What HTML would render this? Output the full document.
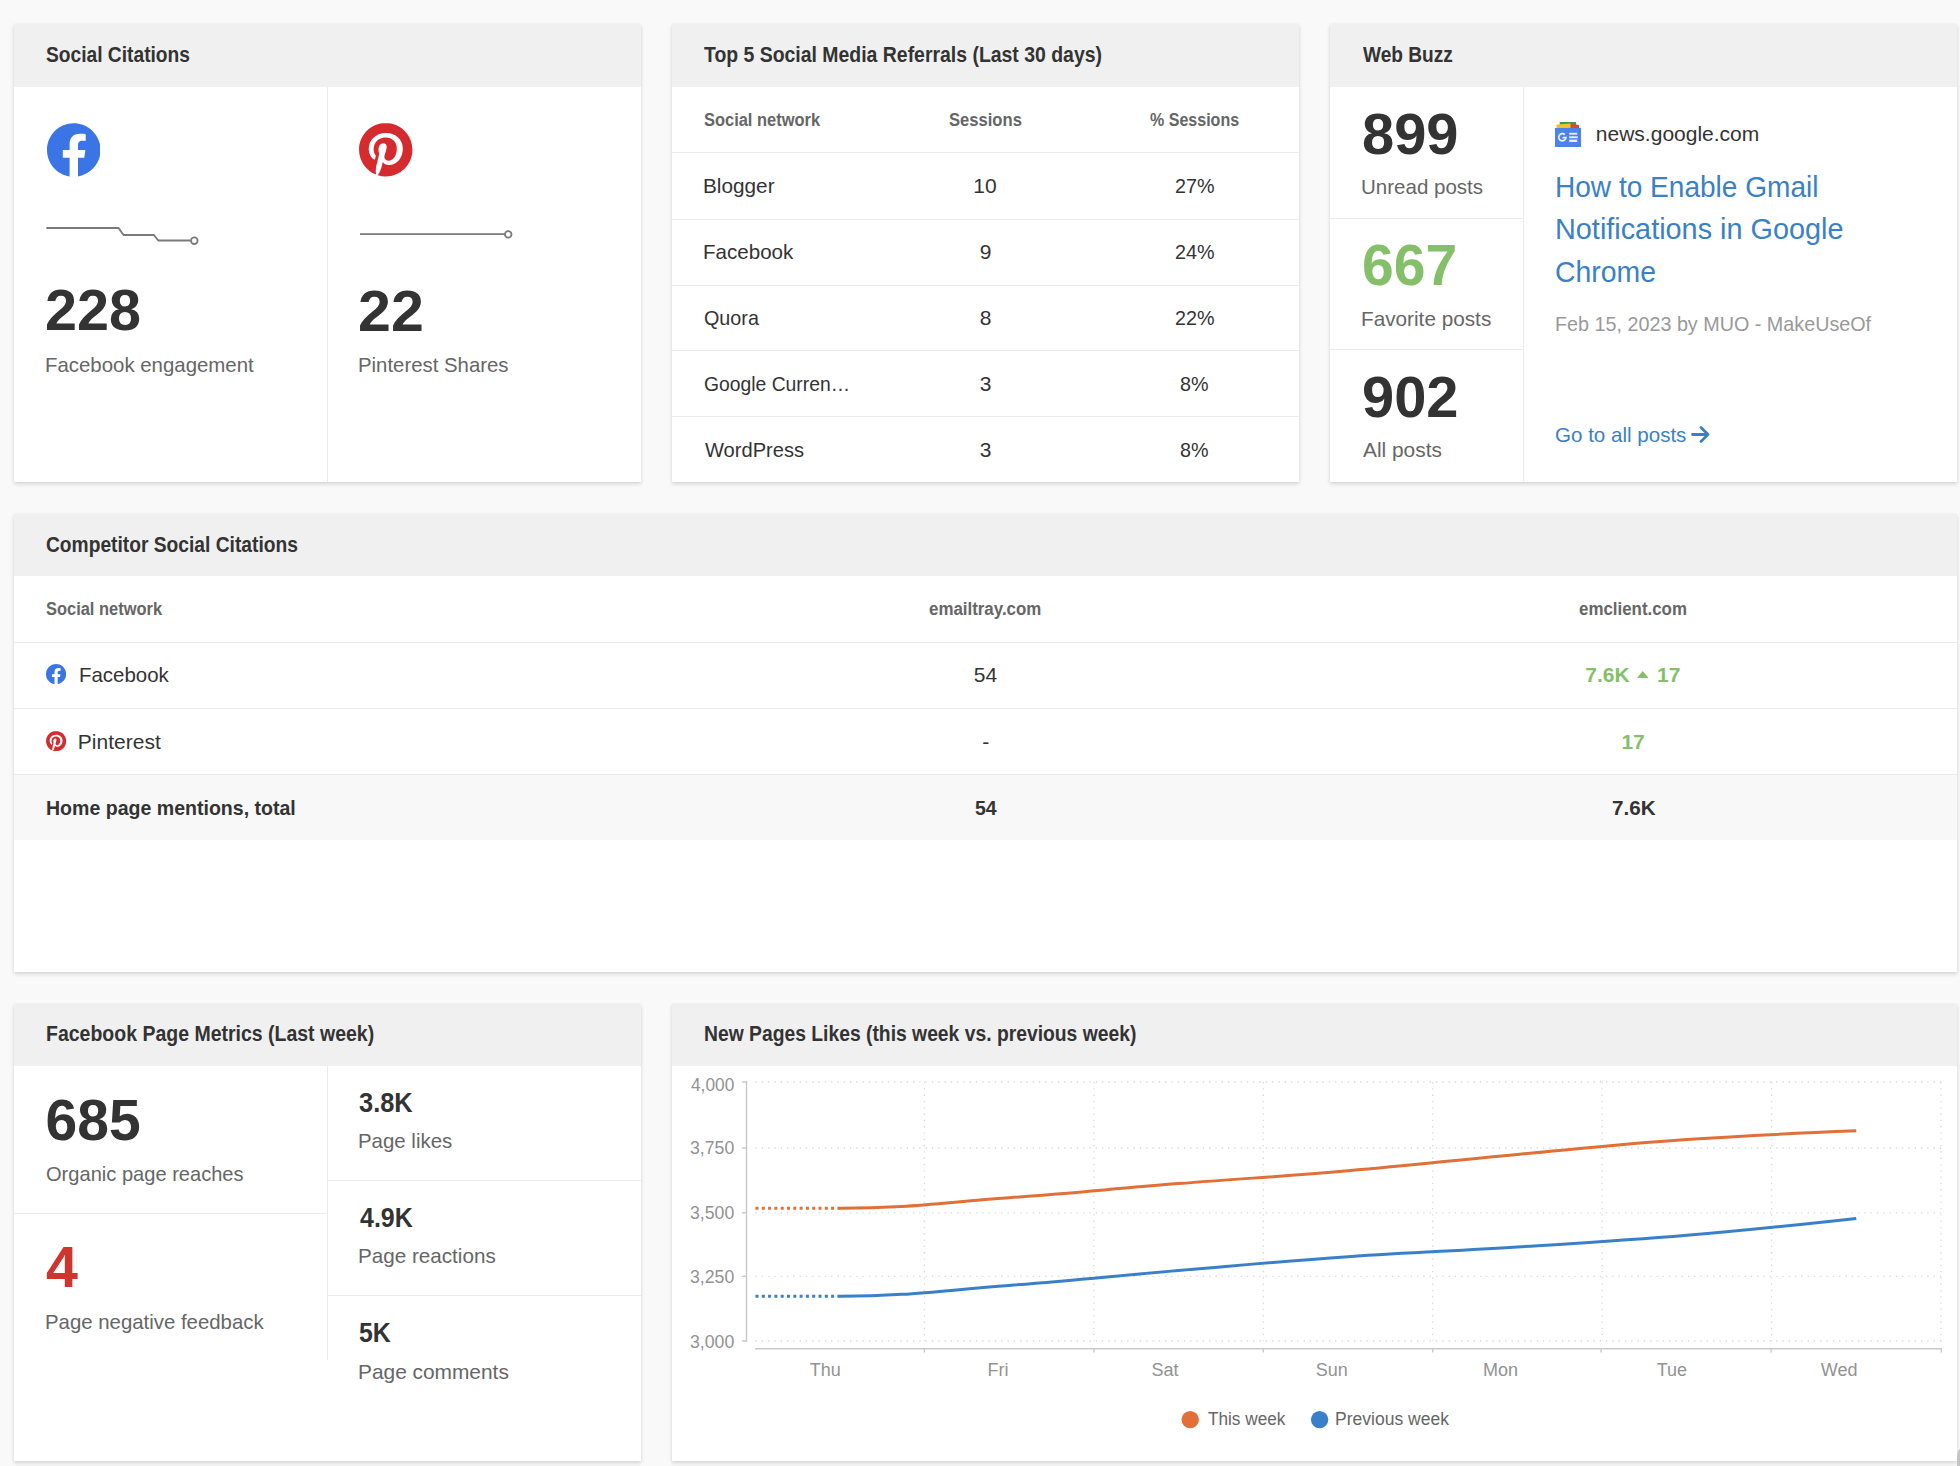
<!DOCTYPE html>
<html><head><meta charset="utf-8"><style>
html,body{margin:0;padding:0;}
body{width:1960px;height:1466px;background:#f9f9f9;position:relative;overflow:hidden;font-family:"Liberation Sans",sans-serif;}
.abs{position:absolute;}
.card{position:absolute;background:#fff;box-shadow:0 1.5px 4px rgba(0,0,0,0.15), 0 0 1px rgba(0,0,0,0.06);}
.hd{background:#f0f0f0;}
.t{position:absolute;white-space:nowrap;transform-origin:0 0;}
</style></head><body>
<div class="card" style="left:14px;top:24px;width:627px;height:458px"><div class="hd" style="height:63px"></div></div><div class="card" style="left:672px;top:24px;width:627px;height:458px"><div class="hd" style="height:63px"></div></div><div class="card" style="left:1330px;top:24px;width:627px;height:458px"><div class="hd" style="height:63px"></div></div><div class="card" style="left:14px;top:514px;width:1943px;height:458px"><div class="hd" style="height:62px"></div></div><div class="card" style="left:14px;top:1004px;width:627px;height:457px"><div class="hd" style="height:62px"></div></div><div class="card" style="left:672px;top:1004px;width:1285px;height:457px"><div class="hd" style="height:62px"></div></div><div class="abs" style="left:327px;top:87px;width:1px;height:395px;background:#ebebeb"></div><div class="abs" style="left:672px;top:152px;width:627px;height:1px;background:#ebebeb"></div><div class="abs" style="left:672px;top:219px;width:627px;height:1px;background:#ebebeb"></div><div class="abs" style="left:672px;top:285px;width:627px;height:1px;background:#ebebeb"></div><div class="abs" style="left:672px;top:350px;width:627px;height:1px;background:#ebebeb"></div><div class="abs" style="left:672px;top:416px;width:627px;height:1px;background:#ebebeb"></div><div class="abs" style="left:1523px;top:87px;width:1px;height:395px;background:#ebebeb"></div><div class="abs" style="left:1330px;top:218px;width:193px;height:1px;background:#ebebeb"></div><div class="abs" style="left:1330px;top:349px;width:193px;height:1px;background:#ebebeb"></div><div class="abs" style="left:14px;top:774px;width:1943px;height:66px;background:#f8f8f8"></div><div class="abs" style="left:14px;top:642px;width:1943px;height:1px;background:#ebebeb"></div><div class="abs" style="left:14px;top:708px;width:1943px;height:1px;background:#ebebeb"></div><div class="abs" style="left:14px;top:774px;width:1943px;height:1px;background:#ebebeb"></div><div class="abs" style="left:327px;top:1066px;width:1px;height:294px;background:#ebebeb"></div><div class="abs" style="left:14px;top:1213px;width:313px;height:1px;background:#ebebeb"></div><div class="abs" style="left:328px;top:1180px;width:313px;height:1px;background:#ebebeb"></div><div class="abs" style="left:328px;top:1295px;width:313px;height:1px;background:#ebebeb"></div>
<svg class="abs" style="left:46.9px;top:123.3px" width="53.6" height="53.6" viewBox="0 0 24 24"><path fill="#3b75e5" d="M24 12.073c0-6.627-5.373-12-12-12s-12 5.373-12 12c0 5.99 4.388 10.954 10.125 11.854v-8.385H7.078v-3.47h3.047V9.43c0-3.007 1.792-4.669 4.533-4.669 1.312 0 2.686.235 2.686.235v2.953H15.83c-1.491 0-1.956.925-1.956 1.874v2.25h3.328l-.532 3.47h-2.796v8.385C19.612 23.027 24 18.062 24 12.073z"/></svg><svg class="abs" style="left:359.2px;top:123.4px" width="53.5" height="53.5" viewBox="0 0 24 24"><path fill="#d52b2f" d="M12.017 0C5.396 0 .029 5.367.029 11.987c0 5.079 3.158 9.417 7.618 11.162-.105-.949-.199-2.403.041-3.439.219-.937 1.406-5.957 1.406-5.957s-.359-.72-.359-1.781c0-1.663.967-2.911 2.168-2.911 1.024 0 1.518.769 1.518 1.688 0 1.029-.653 2.567-.992 3.992-.285 1.193.6 2.165 1.775 2.165 2.128 0 3.768-2.245 3.768-5.487 0-2.861-2.063-4.869-5.008-4.869-3.41 0-5.409 2.562-5.409 5.199 0 1.033.394 2.143.889 2.741.099.12.112.225.085.345-.09.375-.293 1.199-.334 1.363-.053.225-.172.271-.401.165-1.495-.69-2.433-2.878-2.433-4.646 0-3.776 2.748-7.252 7.92-7.252 4.158 0 7.392 2.967 7.392 6.923 0 4.135-2.607 7.462-6.233 7.462-1.214 0-2.354-.629-2.758-1.379l-.749 2.848c-.269 1.045-1.004 2.352-1.498 3.146 1.123.345 2.306.535 3.55.535 6.607 0 11.985-5.365 11.985-11.987C23.97 5.39 18.592.026 11.985.026L12.017 0z"/></svg><svg class="abs" style="left:46px;top:664.2px" width="20.2" height="20.2" viewBox="0 0 24 24"><path fill="#3b75e5" d="M24 12.073c0-6.627-5.373-12-12-12s-12 5.373-12 12c0 5.99 4.388 10.954 10.125 11.854v-8.385H7.078v-3.47h3.047V9.43c0-3.007 1.792-4.669 4.533-4.669 1.312 0 2.686.235 2.686.235v2.953H15.83c-1.491 0-1.956.925-1.956 1.874v2.25h3.328l-.532 3.47h-2.796v8.385C19.612 23.027 24 18.062 24 12.073z"/></svg><svg class="abs" style="left:46px;top:731px" width="20.2" height="20.2" viewBox="0 0 24 24"><path fill="#d52b2f" d="M12.017 0C5.396 0 .029 5.367.029 11.987c0 5.079 3.158 9.417 7.618 11.162-.105-.949-.199-2.403.041-3.439.219-.937 1.406-5.957 1.406-5.957s-.359-.72-.359-1.781c0-1.663.967-2.911 2.168-2.911 1.024 0 1.518.769 1.518 1.688 0 1.029-.653 2.567-.992 3.992-.285 1.193.6 2.165 1.775 2.165 2.128 0 3.768-2.245 3.768-5.487 0-2.861-2.063-4.869-5.008-4.869-3.41 0-5.409 2.562-5.409 5.199 0 1.033.394 2.143.889 2.741.099.12.112.225.085.345-.09.375-.293 1.199-.334 1.363-.053.225-.172.271-.401.165-1.495-.69-2.433-2.878-2.433-4.646 0-3.776 2.748-7.252 7.92-7.252 4.158 0 7.392 2.967 7.392 6.923 0 4.135-2.607 7.462-6.233 7.462-1.214 0-2.354-.629-2.758-1.379l-.749 2.848c-.269 1.045-1.004 2.352-1.498 3.146 1.123.345 2.306.535 3.55.535 6.607 0 11.985-5.365 11.985-11.987C23.97 5.39 18.592.026 11.985.026L12.017 0z"/></svg>
<svg class="abs" style="left:1555px;top:121px" width="26" height="26" viewBox="0 0 26 26">
<rect x="4.7" y="1" width="16.3" height="7" fill="#3e9b4a"/>
<polygon points="1.5,3.5 15.7,2.5 15.7,8 1.5,8" fill="#f2be33"/>
<polygon points="15.7,2.5 24,4 24,8 15.7,8" fill="#d8473a"/>
<rect x="0" y="7" width="26" height="19" fill="#4c83ea"/>
<path d="M9.8,13.6 A3.6,3.6 0 1 0 10.9,16.6 L7.6,16.6" fill="none" stroke="#e8eefc" stroke-width="1.8"/>
<rect x="14.2" y="11.8" width="8" height="1.9" fill="#e8eefc"/>
<rect x="14.2" y="15.3" width="8.5" height="1.9" fill="#e8eefc"/>
<rect x="14.2" y="18.6" width="8" height="2.4" fill="#e8eefc"/>
</svg>
<svg class="abs" style="left:1691px;top:425px" width="20" height="19" viewBox="0 0 20 19"><path d="M1.5,9.5 H17 M10,2.5 L17,9.5 L10,16.5" fill="none" stroke="#3a80c6" stroke-width="2.8" stroke-linecap="round" stroke-linejoin="round"/></svg>
<svg class="abs" width="1960" height="1466" viewBox="0 0 1960 1466" style="left:0;top:0"><line x1="755.5" y1="1082" x2="1941" y2="1082" stroke="#d8d8d8" stroke-width="1.3" stroke-dasharray="1.3 5"/><line x1="755.5" y1="1148" x2="1941" y2="1148" stroke="#d8d8d8" stroke-width="1.3" stroke-dasharray="1.3 5"/><line x1="755.5" y1="1212.8" x2="1941" y2="1212.8" stroke="#d8d8d8" stroke-width="1.3" stroke-dasharray="1.3 5"/><line x1="755.5" y1="1276.3" x2="1941" y2="1276.3" stroke="#d8d8d8" stroke-width="1.3" stroke-dasharray="1.3 5"/><line x1="755.5" y1="1341" x2="1941" y2="1341" stroke="#d8d8d8" stroke-width="1.3" stroke-dasharray="1.3 5"/><line x1="924.4" y1="1082" x2="924.4" y2="1341" stroke="#d8d8d8" stroke-width="1.3" stroke-dasharray="1.3 5"/><line x1="1093.9" y1="1082" x2="1093.9" y2="1341" stroke="#d8d8d8" stroke-width="1.3" stroke-dasharray="1.3 5"/><line x1="1263.3" y1="1082" x2="1263.3" y2="1341" stroke="#d8d8d8" stroke-width="1.3" stroke-dasharray="1.3 5"/><line x1="1432.7" y1="1082" x2="1432.7" y2="1341" stroke="#d8d8d8" stroke-width="1.3" stroke-dasharray="1.3 5"/><line x1="1602.1" y1="1082" x2="1602.1" y2="1341" stroke="#d8d8d8" stroke-width="1.3" stroke-dasharray="1.3 5"/><line x1="1771.6" y1="1082" x2="1771.6" y2="1341" stroke="#d8d8d8" stroke-width="1.3" stroke-dasharray="1.3 5"/><line x1="1941" y1="1082" x2="1941" y2="1341" stroke="#d8d8d8" stroke-width="1.3" stroke-dasharray="1.3 5"/><line x1="746.5" y1="1081.3" x2="746.5" y2="1341.8" stroke="#c8c8c8" stroke-width="1.4"/><line x1="742" y1="1082" x2="747" y2="1082" stroke="#c8c8c8" stroke-width="1.4"/><line x1="742" y1="1148" x2="747" y2="1148" stroke="#c8c8c8" stroke-width="1.4"/><line x1="742" y1="1212.8" x2="747" y2="1212.8" stroke="#c8c8c8" stroke-width="1.4"/><line x1="742" y1="1276.3" x2="747" y2="1276.3" stroke="#c8c8c8" stroke-width="1.4"/><line x1="742" y1="1341" x2="747" y2="1341" stroke="#c8c8c8" stroke-width="1.4"/><line x1="755" y1="1348.8" x2="1942" y2="1348.8" stroke="#c8c8c8" stroke-width="1.5"/><line x1="924.4" y1="1348" x2="924.4" y2="1352.5" stroke="#c8c8c8" stroke-width="1.4"/><line x1="1093.9" y1="1348" x2="1093.9" y2="1352.5" stroke="#c8c8c8" stroke-width="1.4"/><line x1="1263.3" y1="1348" x2="1263.3" y2="1352.5" stroke="#c8c8c8" stroke-width="1.4"/><line x1="1432.7" y1="1348" x2="1432.7" y2="1352.5" stroke="#c8c8c8" stroke-width="1.4"/><line x1="1601.1" y1="1348" x2="1601.1" y2="1352.5" stroke="#c8c8c8" stroke-width="1.4"/><line x1="1771.1" y1="1348" x2="1771.1" y2="1352.5" stroke="#c8c8c8" stroke-width="1.4"/><line x1="1941.3" y1="1348" x2="1941.3" y2="1352.5" stroke="#c8c8c8" stroke-width="1.4"/><line x1="755.5" y1="1208.3" x2="840" y2="1208.3" stroke="#e07037" stroke-width="3" stroke-dasharray="3 3.3"/><path d="M839.70,1208.30 C907.46,1208.30 941.34,1202.64 1009.10,1197.70 C1076.90,1192.76 1110.80,1188.98 1178.60,1183.60 C1246.36,1178.22 1280.24,1176.64 1348.00,1170.80 C1415.76,1164.96 1449.64,1160.64 1517.40,1154.40 C1585.20,1148.16 1619.10,1144.32 1686.90,1139.60 C1754.66,1134.88 1856.30,1130.80 1856.30,1130.80" fill="none" stroke="#e07037" stroke-width="3" stroke-linecap="butt"/><line x1="755.5" y1="1296.2" x2="840" y2="1296.2" stroke="#3a80c8" stroke-width="3" stroke-dasharray="3 3.3"/><path d="M839.70,1296.20 C907.46,1296.20 941.34,1290.54 1009.10,1285.40 C1076.90,1280.26 1110.80,1276.24 1178.60,1270.50 C1246.36,1264.76 1280.24,1261.40 1348.00,1256.70 C1415.76,1252.00 1449.64,1251.28 1517.40,1247.00 C1585.20,1242.72 1619.10,1241.02 1686.90,1235.30 C1754.66,1229.58 1856.30,1218.40 1856.30,1218.40" fill="none" stroke="#3a80c8" stroke-width="3" stroke-linecap="butt"/><circle cx="1190.2" cy="1419.6" r="8.7" fill="#e07037"/><circle cx="1319.6" cy="1419.6" r="8.7" fill="#3a80c8"/><polyline points="46.4,228 118.5,228 123.6,235 153.8,235 158.4,240.5 190.5,240.5" fill="none" stroke="#7a7a7a" stroke-width="1.8"/><circle cx="194.3" cy="240.7" r="3.3" fill="#fff" stroke="#7a7a7a" stroke-width="1.8"/><polyline points="360,234.2 504.5,234.2" fill="none" stroke="#7a7a7a" stroke-width="1.8"/><circle cx="508.2" cy="234.4" r="3.3" fill="#fff" stroke="#7a7a7a" stroke-width="1.8"/><polygon points="1636.9,678 1648.6,678 1642.75,671" fill="#86bf6a"/></svg>
<div class="t" style="left:46.18px;top:44.20px;font-size:22px;line-height:22px;font-weight:700;color:#333;transform:scaleX(0.8724);">Social Citations</div><div class="t" style="left:704.45px;top:44.30px;font-size:22px;line-height:22px;font-weight:700;color:#333;transform:scaleX(0.8829);">Top 5 Social Media Referrals (Last 30 days)</div><div class="t" style="left:1362.65px;top:44.30px;font-size:22px;line-height:22px;font-weight:700;color:#333;transform:scaleX(0.8680);">Web Buzz</div><div class="t" style="left:46.38px;top:534.20px;font-size:22px;line-height:22px;font-weight:700;color:#333;transform:scaleX(0.8732);">Competitor Social Citations</div><div class="t" style="left:46.16px;top:1022.60px;font-size:22px;line-height:22px;font-weight:700;color:#333;transform:scaleX(0.8859);">Facebook Page Metrics (Last week)</div><div class="t" style="left:703.97px;top:1022.60px;font-size:22px;line-height:22px;font-weight:700;color:#333;transform:scaleX(0.8774);">New Pages Likes (this week vs. previous week)</div><div class="t" style="left:45.43px;top:282.00px;font-size:57px;line-height:57px;font-weight:700;color:#333;transform:scaleX(1.0088);">228</div><div class="t" style="left:45.31px;top:354.00px;font-size:21px;line-height:21px;color:#666;transform:scaleX(0.9714);">Facebook engagement</div><div class="t" style="left:358.18px;top:282.50px;font-size:57px;line-height:57px;font-weight:700;color:#333;transform:scaleX(1.0373);">22</div><div class="t" style="left:358.01px;top:353.60px;font-size:21px;line-height:21px;color:#666;transform:scaleX(0.9693);">Pinterest Shares</div><div class="t" style="left:703.74px;top:111.20px;font-size:18px;line-height:18px;font-weight:700;color:#666;transform:scaleX(0.9135);">Social network</div><div class="t" style="left:949.33px;top:111.20px;font-size:18px;line-height:18px;font-weight:700;color:#666;transform:scaleX(0.9221);">Sessions</div><div class="t" style="left:1150.06px;top:111.20px;font-size:18px;line-height:18px;font-weight:700;color:#666;transform:scaleX(0.8908);">% Sessions</div><div class="t" style="left:702.67px;top:175.00px;font-size:21px;line-height:21px;color:#333;transform:scaleX(0.9886);">Blogger</div><div class="t" style="left:973.25px;top:175.00px;font-size:21px;line-height:21px;color:#333;">10</div><div class="t" style="left:1174.71px;top:175.00px;font-size:21px;line-height:21px;color:#333;transform:scaleX(0.9400);">27%</div><div class="t" style="left:702.69px;top:240.70px;font-size:21px;line-height:21px;color:#333;transform:scaleX(0.9789);">Facebook</div><div class="t" style="left:979.75px;top:240.70px;font-size:21px;line-height:21px;color:#333;">9</div><div class="t" style="left:1174.71px;top:240.70px;font-size:21px;line-height:21px;color:#333;transform:scaleX(0.9400);">24%</div><div class="t" style="left:703.71px;top:306.60px;font-size:21px;line-height:21px;color:#333;transform:scaleX(0.9404);">Quora</div><div class="t" style="left:979.75px;top:306.60px;font-size:21px;line-height:21px;color:#333;">8</div><div class="t" style="left:1174.71px;top:306.60px;font-size:21px;line-height:21px;color:#333;transform:scaleX(0.9400);">22%</div><div class="t" style="left:703.73px;top:372.70px;font-size:21px;line-height:21px;color:#333;transform:scaleX(0.9200);">Google Curren…</div><div class="t" style="left:979.75px;top:372.70px;font-size:21px;line-height:21px;color:#333;">3</div><div class="t" style="left:1179.88px;top:372.70px;font-size:21px;line-height:21px;color:#333;transform:scaleX(0.9400);">8%</div><div class="t" style="left:704.65px;top:438.70px;font-size:21px;line-height:21px;color:#333;transform:scaleX(0.9573);">WordPress</div><div class="t" style="left:979.75px;top:438.70px;font-size:21px;line-height:21px;color:#333;">3</div><div class="t" style="left:1179.88px;top:438.70px;font-size:21px;line-height:21px;color:#333;transform:scaleX(0.9400);">8%</div><div class="t" style="left:1361.62px;top:105.80px;font-size:57px;line-height:57px;font-weight:700;color:#333;transform:scaleX(1.0143);">899</div><div class="t" style="left:1361.10px;top:175.70px;font-size:21px;line-height:21px;color:#666;transform:scaleX(0.9770);">Unread posts</div><div class="t" style="left:1362.05px;top:236.70px;font-size:57px;line-height:57px;font-weight:700;color:#86bf6a;">667</div><div class="t" style="left:1361.27px;top:307.80px;font-size:21px;line-height:21px;color:#666;transform:scaleX(0.9876);">Favorite posts</div><div class="t" style="left:1361.62px;top:368.60px;font-size:57px;line-height:57px;font-weight:700;color:#333;transform:scaleX(1.0143);">902</div><div class="t" style="left:1362.75px;top:439.00px;font-size:21px;line-height:21px;color:#666;transform:scaleX(0.9937);">All posts</div><div class="t" style="left:1595.85px;top:122.80px;font-size:21px;line-height:21px;color:#333;">news.google.com</div><div class="t" style="left:1554.88px;top:171.80px;font-size:30px;line-height:30px;color:#3a80c6;transform:scaleX(0.9349);">How to Enable Gmail</div><div class="t" style="left:1554.83px;top:214.00px;font-size:30px;line-height:30px;color:#3a80c6;transform:scaleX(0.9613);">Notifications in Google</div><div class="t" style="left:1554.86px;top:256.90px;font-size:30px;line-height:30px;color:#3a80c6;transform:scaleX(0.9466);">Chrome</div><div class="t" style="left:1554.87px;top:313.30px;font-size:21px;line-height:21px;color:#999;transform:scaleX(0.9404);">Feb 15, 2023 by MUO - MakeUseOf</div><div class="t" style="left:1555.07px;top:424.00px;font-size:21px;line-height:21px;color:#3a80c6;transform:scaleX(0.9789);">Go to all posts</div><div class="t" style="left:45.74px;top:600.00px;font-size:18px;line-height:18px;font-weight:700;color:#666;transform:scaleX(0.9135);">Social network</div><div class="t" style="left:929.31px;top:600.00px;font-size:18px;line-height:18px;font-weight:700;color:#666;transform:scaleX(0.9381);">emailtray.com</div><div class="t" style="left:1579.31px;top:600.00px;font-size:18px;line-height:18px;font-weight:700;color:#666;transform:scaleX(0.9381);">emclient.com</div><div class="t" style="left:78.70px;top:664.00px;font-size:21px;line-height:21px;color:#333;transform:scaleX(0.9733);">Facebook</div><div class="t" style="left:973.75px;top:664.00px;font-size:21px;line-height:21px;color:#333;">54</div><div class="t" style="left:1585.25px;top:664.20px;font-size:21px;line-height:21px;font-weight:700;color:#86bf6a;">7.6K</div><div class="t" style="left:1657.05px;top:664.20px;font-size:21px;line-height:21px;font-weight:700;color:#86bf6a;">17</div><div class="t" style="left:77.86px;top:730.80px;font-size:21px;line-height:21px;color:#333;">Pinterest</div><div class="t" style="left:982.25px;top:730.80px;font-size:21px;line-height:21px;color:#333;">-</div><div class="t" style="left:1621.45px;top:730.80px;font-size:21px;line-height:21px;font-weight:700;color:#86bf6a;">17</div><div class="t" style="left:45.72px;top:796.70px;font-size:21px;line-height:21px;font-weight:700;color:#333;transform:scaleX(0.9308);">Home page mentions, total</div><div class="t" style="left:974.59px;top:796.70px;font-size:21px;line-height:21px;font-weight:700;color:#333;transform:scaleX(0.9300);">54</div><div class="t" style="left:1611.67px;top:796.70px;font-size:21px;line-height:21px;font-weight:700;color:#333;transform:scaleX(0.9837);">7.6K</div><div class="t" style="left:45.54px;top:1091.70px;font-size:57px;line-height:57px;font-weight:700;color:#333;">685</div><div class="t" style="left:46.29px;top:1162.50px;font-size:21px;line-height:21px;color:#666;transform:scaleX(0.9561);">Organic page reaches</div><div class="t" style="left:46.24px;top:1239.00px;font-size:57px;line-height:57px;font-weight:700;color:#d0352d;transform:scaleX(1.0067);">4</div><div class="t" style="left:45.31px;top:1310.50px;font-size:21px;line-height:21px;color:#666;transform:scaleX(0.9704);">Page negative feedback</div><div class="t" style="left:358.91px;top:1090.30px;font-size:27px;line-height:27px;font-weight:700;color:#333;transform:scaleX(0.9418);">3.8K</div><div class="t" style="left:357.91px;top:1130.20px;font-size:21px;line-height:21px;color:#666;transform:scaleX(0.9723);">Page likes</div><div class="t" style="left:359.85px;top:1204.90px;font-size:27px;line-height:27px;font-weight:700;color:#333;transform:scaleX(0.9250);">4.9K</div><div class="t" style="left:357.88px;top:1245.40px;font-size:21px;line-height:21px;color:#666;transform:scaleX(0.9832);">Page reactions</div><div class="t" style="left:358.93px;top:1319.70px;font-size:27px;line-height:27px;font-weight:700;color:#333;transform:scaleX(0.9212);">5K</div><div class="t" style="left:357.86px;top:1360.90px;font-size:21px;line-height:21px;color:#666;transform:scaleX(0.9940);">Page comments</div><div class="t" style="left:691.25px;top:1076.10px;font-size:18.5px;line-height:18.5px;color:#929292;transform:scaleX(0.9348);">4,000</div><div class="t" style="left:690.29px;top:1139.00px;font-size:18.5px;line-height:18.5px;color:#929292;transform:scaleX(0.9556);">3,750</div><div class="t" style="left:690.29px;top:1204.00px;font-size:18.5px;line-height:18.5px;color:#929292;transform:scaleX(0.9556);">3,500</div><div class="t" style="left:690.29px;top:1268.30px;font-size:18.5px;line-height:18.5px;color:#929292;transform:scaleX(0.9556);">3,250</div><div class="t" style="left:690.29px;top:1333.30px;font-size:18.5px;line-height:18.5px;color:#929292;transform:scaleX(0.9556);">3,000</div><div class="t" style="left:809.85px;top:1360.80px;font-size:18px;line-height:18px;color:#929292;">Thu</div><div class="t" style="left:987.55px;top:1360.80px;font-size:18px;line-height:18px;color:#929292;">Fri</div><div class="t" style="left:1151.55px;top:1360.80px;font-size:18px;line-height:18px;color:#929292;">Sat</div><div class="t" style="left:1315.65px;top:1360.80px;font-size:18px;line-height:18px;color:#929292;">Sun</div><div class="t" style="left:1483.05px;top:1360.80px;font-size:18px;line-height:18px;color:#929292;">Mon</div><div class="t" style="left:1656.75px;top:1360.80px;font-size:18px;line-height:18px;color:#929292;">Tue</div><div class="t" style="left:1820.75px;top:1360.80px;font-size:18px;line-height:18px;color:#929292;">Wed</div><div class="t" style="left:1207.55px;top:1409.80px;font-size:18px;line-height:18px;color:#666;transform:scaleX(0.9543);">This week</div><div class="t" style="left:1335.10px;top:1409.80px;font-size:18px;line-height:18px;color:#666;transform:scaleX(0.9730);">Previous week</div>
<div class="abs" style="left:1957px;top:1449px;width:3px;height:17px;background:#c4c4c4;border-top-left-radius:4px 12px"></div>
</body></html>
